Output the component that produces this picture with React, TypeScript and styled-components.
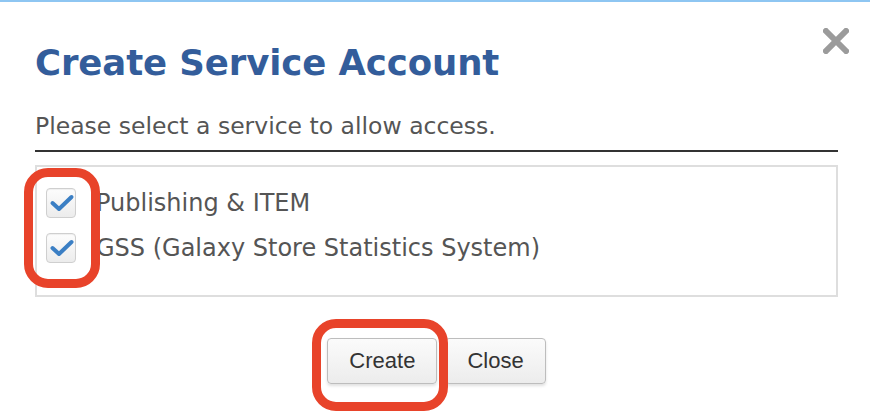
import { FC, ReactNode } from "react";
import styled, { createGlobalStyle } from "styled-components";

const GlobalStyle = createGlobalStyle`
	html, body {
		margin: 0;
		padding: 0;
		background: #fff;
	}
	body {
		font-family: "DejaVu Sans", Verdana, sans-serif;
	}
`;

const services = ["Publishing & ITEM", "GSS (Galaxy Store Statistics System)"];

const CheckMark: FC = () => (
	<svg width='30' height='30' viewBox='0 0 30 30'>
		<path d='M6.5 15 L13 21 L25.5 9' fill='none' stroke='#3b7fc4' strokeWidth='4' strokeLinecap='round' strokeLinejoin='round' />
	</svg>
);

const CloseIcon: FC = () => (
	<svg width='26' height='26' viewBox='0 0 26 26'>
		<path d='M3 3 L23 23 M23 3 L3 23' stroke='#9b9b9b' strokeWidth='6' strokeLinecap='square' />
	</svg>
);

const ServiceOption: FC<{ label: string }> = ({ label }) => (
	<Option>
		<Box>
			<CheckMark />
		</Box>
		<Label>{label}</Label>
	</Option>
);

const Highlighted: FC<{ children: ReactNode; inset: string }> = ({ children, inset }) => (
	<Marked>
		{children}
		<Ring $inset={inset} />
	</Marked>
);

export default function App() {
	return (
		<>
			<GlobalStyle />
			<Dialog>
				<CloseButton aria-label='close'>
					<CloseIcon />
				</CloseButton>
				<Title>Create Service Account</Title>
				<Lead>Please select a service to allow access.</Lead>
				<List>
					{services.map((s) => (
						<ServiceOption key={s} label={s} />
					))}
					<Ring $inset='1px auto auto -13px' $w={76} $h={120} />
				</List>
				<Actions>
					<Highlighted inset='-19px -11px -27px -15px'>
						<Button>Create</Button>
					</Highlighted>
					<Button>Close</Button>
				</Actions>
			</Dialog>
		</>
	);
}

const Dialog = styled.div`
	position: relative;
	width: 870px;
	height: 420px;
	box-sizing: border-box;
	border-top: 2px solid #8ec6f2;
	padding: 0 32px 0 35px;
	overflow: hidden;
`;

const CloseButton = styled.button`
	position: absolute;
	top: 26px;
	right: 21px;
	border: 0;
	padding: 0;
	background: none;
	display: flex;
	filter: blur(0.4px);
`;

const Title = styled.h1`
	margin: 39px 0 0;
	font-family: "DejaVu Sans", Verdana, sans-serif;
	font-weight: bold;
	font-size: 35.5px;
	line-height: 44px;
	letter-spacing: -0.1px;
	color: #335d9b;
`;

const Lead = styled.p`
	margin: 27px 0 0;
	padding-bottom: 10px;
	border-bottom: 2px solid #333;
	font-family: "DejaVu Sans", Verdana, sans-serif;
	font-size: 23.5px;
	line-height: 28px;
	color: #555;
`;

const List = styled.div`
	position: relative;
	margin-top: 13px;
	height: 132px;
	box-sizing: border-box;
	border: 2px solid #dedede;
	padding: 21px 9px 0;
	display: flex;
	flex-direction: column;
	gap: 15px;
`;

const Option = styled.label`
	display: flex;
	align-items: center;
	gap: 20px;
`;

const Box = styled.span`
	width: 30px;
	height: 30px;
	box-sizing: border-box;
	border: 1px solid #cfcfcf;
	border-radius: 4px;
	background: linear-gradient(#fdfdfd, #ececec);
	box-shadow: inset 0 1px 1px rgba(0, 0, 0, 0.06);
	display: flex;
	align-items: center;
	justify-content: center;
	svg {
		margin: -1px;
	}
`;

const Label = styled.span`
	font-family: "DejaVu Sans", Verdana, sans-serif;
	font-size: 24px;
	line-height: 30px;
	color: #555;
`;

const Actions = styled.div`
	margin-top: 41px;
	display: flex;
	justify-content: center;
	gap: 8px;
`;

const Marked = styled.div`
	position: relative;
	display: flex;
`;

const Ring = styled.span<{ $inset: string; $w?: number; $h?: number }>`
	position: absolute;
	inset: ${(p) => p.$inset};
	${(p) => (p.$w ? `width: ${p.$w}px; height: ${p.$h}px;` : "")}
	box-sizing: border-box;
	border: 9px solid #e8432a;
	border-radius: 24px;
	pointer-events: none;
`;

const Button = styled.button`
	height: 46px;
	padding: 0 21px;
	border: 1px solid #bdbdbd;
	border-radius: 4px;
	background: linear-gradient(#fbfbfb, #ececec);
	box-shadow: 0 2px 3px rgba(0, 0, 0, 0.12);
	font-family: "Liberation Sans", Arial, sans-serif;
	font-size: 22px;
	color: #333;
`;
